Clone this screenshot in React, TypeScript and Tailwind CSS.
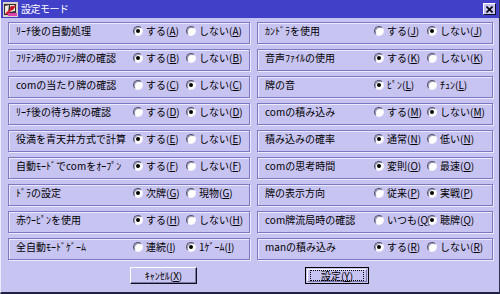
import React from "react";

type Opt = { t: string; k: string };
type Row = { label: string; a: Opt; b: Opt; sel: 0 | 1 };

const left: Row[] = [
  { label: "ﾘｰﾁ後の自動処理", a: { t: "する", k: "A" }, b: { t: "しない", k: "A" }, sel: 0 },
  { label: "ﾌﾘﾃﾝ時のﾌﾘﾃﾝ牌の確認", a: { t: "する", k: "B" }, b: { t: "しない", k: "B" }, sel: 0 },
  { label: "comの当たり牌の確認", a: { t: "する", k: "C" }, b: { t: "しない", k: "C" }, sel: 1 },
  { label: "ﾘｰﾁ後の待ち牌の確認", a: { t: "する", k: "D" }, b: { t: "しない", k: "D" }, sel: 1 },
  { label: "役満を青天井方式で計算", a: { t: "する", k: "E" }, b: { t: "しない", k: "E" }, sel: 0 },
  { label: "自動ﾓｰﾄﾞでcomをｵｰﾌﾟﾝ", a: { t: "する", k: "F" }, b: { t: "しない", k: "F" }, sel: 0 },
  { label: "ﾄﾞﾗの設定", a: { t: "次牌", k: "G" }, b: { t: "現物", k: "G" }, sel: 0 },
  { label: "赤ｳｰﾋﾟﾝを使用", a: { t: "する", k: "H" }, b: { t: "しない", k: "H" }, sel: 0 },
  { label: "全自動ﾓｰﾄﾞｹﾞｰﾑ", a: { t: "連続", k: "I" }, b: { t: "1ｹﾞｰﾑ", k: "I" }, sel: 1 },
];

const right: Row[] = [
  { label: "ｶﾝﾄﾞﾗを使用", a: { t: "する", k: "J" }, b: { t: "しない", k: "J" }, sel: 1 },
  { label: "音声ﾌｧｲﾙの使用", a: { t: "する", k: "K" }, b: { t: "しない", k: "K" }, sel: 0 },
  { label: "牌の音", a: { t: "ﾋﾟﾝ", k: "L" }, b: { t: "ﾁｭﾝ", k: "L" }, sel: 0 },
  { label: "comの積み込み", a: { t: "する", k: "M" }, b: { t: "しない", k: "M" }, sel: 1 },
  { label: "積み込みの確率", a: { t: "通常", k: "N" }, b: { t: "低い", k: "N" }, sel: 0 },
  { label: "comの思考時間", a: { t: "変則", k: "O" }, b: { t: "最速", k: "O" }, sel: 0 },
  { label: "牌の表示方向", a: { t: "従来", k: "P" }, b: { t: "実戦", k: "P" }, sel: 1 },
  { label: "com牌流局時の確認", a: { t: "いつも", k: "Q" }, b: { t: "聴牌", k: "Q" }, sel: 1 },
  { label: "manの積み込み", a: { t: "する", k: "R" }, b: { t: "しない", k: "R" }, sel: 0 },
];

function Radio({ checked }: { checked: boolean }) {
  return (
    <span className="relative flex items-center justify-center w-[10px] h-[10px] shrink-0 rounded-full bg-white border border-[#505070] border-r-[#f4f2ff] border-b-[#f4f2ff] shadow-[inset_1px_1px_0_#9a98b0]">
      {checked && <span className="w-[4px] h-[4px] rounded-full bg-black" />}
    </span>
  );
}

function Item({ o, checked, w }: { o: Opt; checked: boolean; w?: string }) {
  return (
    <div className={`flex items-center gap-[3px] shrink-0 ${w ?? ""}`}>
      <Radio checked={checked} />
      <span className="whitespace-nowrap">
        {o.t}(<u>{o.k}</u>)
      </span>
    </div>
  );
}

function Group({ r, labelW }: { r: Row; labelW: string }) {
  return (
    <div className="h-[22px] border border-[#7c78c4] shadow-[inset_1px_1px_0_#eceaff,1px_1px_0_#eceaff] pt-[1px] pl-[7px]">
      <div className="flex items-center h-[13px]">
        <div className={`${labelW} shrink-0 whitespace-nowrap`}>{r.label}</div>
        <Item o={r.a} checked={r.sel === 0} w="w-[53px]" />
        <Item o={r.b} checked={r.sel === 1} />
      </div>
    </div>
  );
}

export default function App() {
  return (
    <div
      className="w-[500px] h-[294px] bg-[#c8c4f2] flex flex-col border-l border-l-[#ecebff] border-r border-r-[#303050] border-b-2 border-b-[#202040] text-black text-[10px] leading-[12px] overflow-hidden"
      style={{ fontFamily: '"Noto Sans CJK JP", "Noto Sans", sans-serif' }}
    >
      <div className="h-[18px] shrink-0 bg-[#4040c8] flex items-center pl-[2px] pr-[3px]">
        <svg width="15" height="15" viewBox="0 0 15 15" className="shrink-0">
          <rect x="0" y="0" width="15" height="15" fill="#d8d0c8" />
          <rect x="1" y="2" width="12" height="11" fill="#303030" />
          <path d="M2 4 L6 3 L5 11 L2 12 Z" fill="#f0e8e0" />
          <path d="M7 3 L12 3 L12 9 L7 10 Z" fill="#e8e0d8" />
          <path d="M3 12 L12 4" stroke="#e02030" strokeWidth="2" />
          <circle cx="9" cy="6" r="2" fill="#c01020" />
          <rect x="5" y="11" width="9" height="3" fill="#e040b0" />
        </svg>
        <span className="ml-[3px] text-white text-[10px] tracking-[-0.5px]">設定モード</span>
        <div className="ml-auto w-[13px] h-[12px] bg-[#c8c4f2] border border-[#ffffff] border-r-[#101020] border-b-[#101020] flex items-center justify-center">
          <svg width="7" height="7" viewBox="0 0 7 7">
            <path d="M0.5 0.5 L6.5 6.5 M6.5 0.5 L0.5 6.5" stroke="black" strokeWidth="1.6" />
          </svg>
        </div>
      </div>

      <div className="grid grid-cols-[242px_236px] gap-x-[7px] gap-y-[5px] pl-[7px] pt-[4px]">
        {left.map((r, i) => (
          <React.Fragment key={i}>
            <Group r={r} labelW="w-[117px]" />
            <Group r={right[i]} labelW="w-[109px]" />
          </React.Fragment>
        ))}
      </div>

      <div className="flex mt-[7px]">
        <div className="ml-[129px] w-[67px] h-[17px] border border-[#ffffff] border-r-[#101020] border-b-[#101020] shadow-[inset_-1px_-1px_0_#7c78a8] flex items-center justify-center">
          <span>ｷｬﾝｾﾙ(<u>X</u>)</span>
        </div>
        <div className="ml-[108px] w-[64px] h-[17px] border border-black p-[1px] flex">
          <div className="flex-1 border border-t-white border-l-white border-r-[#7c78a8] border-b-[#7c78a8] flex items-center justify-center">
            <div className="w-[54px] h-[11px] border border-dotted border-black flex items-center justify-center">
              <span>設定(<u>Y</u>)</span>
            </div>
          </div>
        </div>
      </div>
    </div>
  );
}
